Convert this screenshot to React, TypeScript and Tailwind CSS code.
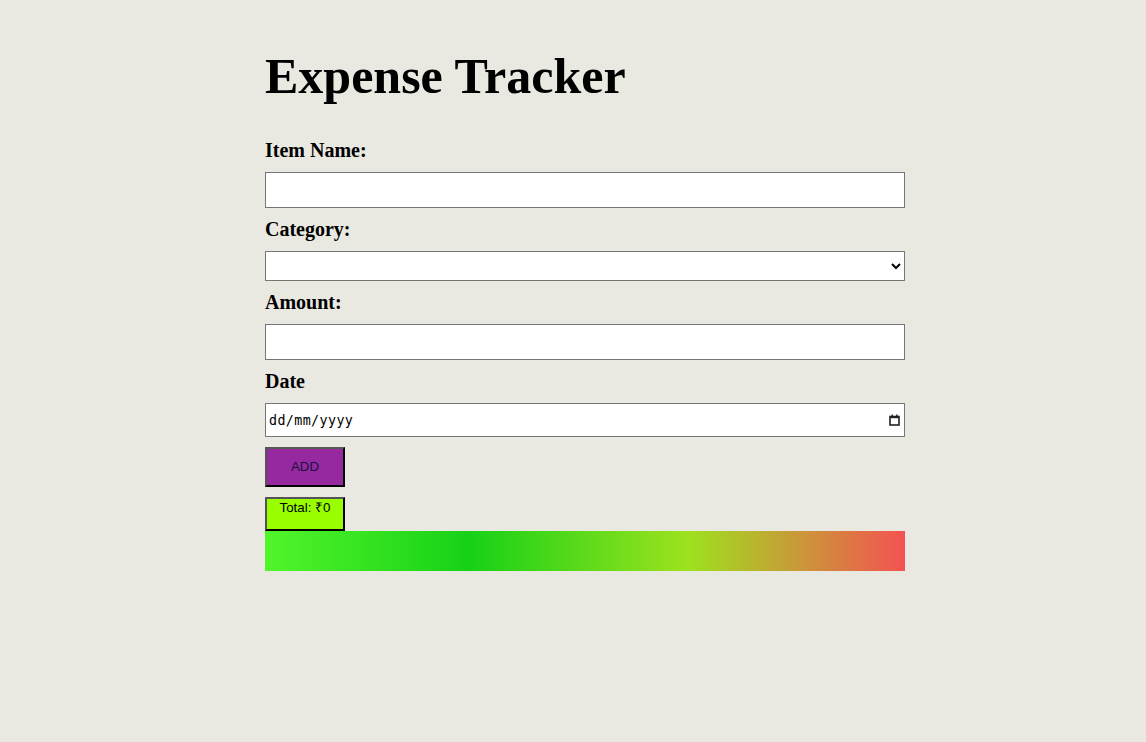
import { useState } from "react";

export default function App() {
  const [total] = useState(0);

  return (
    <div className="min-h-[742px] w-full bg-[#e9e9e1] font-['Liberation_Serif',serif] text-black">
      <div className="ml-[265px] w-[640px] pt-[49px]">
        <h1 className="text-[50px] font-bold leading-[55px]">Expense Tracker</h1>

        <form className="mt-[35px] flex flex-col" onSubmit={(e) => e.preventDefault()}>
          <label className="text-[20px] font-bold leading-[23px]">Item Name:</label>
          <input
            type="text"
            className="mt-[10px] h-[36px] w-full border border-[#767676] bg-white px-2 font-['Liberation_Sans',sans-serif] text-[13px]"
          />

          <label className="mt-[10px] text-[20px] font-bold leading-[23px]">Category:</label>
          <select className="mt-[10px] h-[30px] w-full border border-[#767676] bg-white font-['Liberation_Sans',sans-serif] text-[13px]">
            <option value=""></option>
            <option value="food">Food</option>
            <option value="travel">Travel</option>
            <option value="bills">Bills</option>
          </select>

          <label className="mt-[10px] text-[20px] font-bold leading-[23px]">Amount:</label>
          <input
            type="number"
            className="mt-[10px] h-[36px] w-full border border-[#767676] bg-white px-2 font-['Liberation_Sans',sans-serif] text-[13px]"
          />

          <label className="mt-[10px] text-[20px] font-bold leading-[23px]">Date</label>
          <div className="relative mt-[10px] h-[34px] w-full">
            <input
              type="text"
              placeholder="dd/mm/yyyy"
              className="h-full w-full border border-[#767676] bg-white pl-[3px] pr-8 font-['DejaVu_Sans_Mono',monospace] text-[13.33px] tracking-[0.4px] placeholder:text-black"
            />
            {/* calendar picker glyph */}
            <svg
              className="pointer-events-none absolute right-[5px] top-[11px]"
              width="11"
              height="12"
              viewBox="0 0 11 12"
            >
              <rect x="1" y="2.5" width="9" height="8.5" fill="none" stroke="#222" strokeWidth="1.6" />
              <rect x="1" y="2" width="9" height="2.2" fill="#222" />
              <rect x="2.5" y="0.5" width="1.4" height="2" fill="#222" />
              <rect x="7.1" y="0.5" width="1.4" height="2" fill="#222" />
            </svg>
          </div>

          <button
            type="submit"
            className="mt-[10px] h-[40px] w-[80px] border-2 border-t-[#555] border-l-[#555] border-r-black border-b-black bg-[#9629a0] font-['Liberation_Sans',sans-serif] text-[13.33px] text-[#1a1040]"
          >
            ADD
          </button>
        </form>

        <div className="mt-[10px] h-[34px] w-[80px] border-2 border-t-[#555] border-l-[#555] border-r-black border-b-black bg-[#99ff00] pt-px text-center font-['Liberation_Sans',sans-serif] text-[13.33px] leading-[15px]">
          Total: ₹{total}
        </div>
        <div className="h-[40px] w-full bg-[linear-gradient(to_right,#52f52a_0%,#17d117_32%,#9de21e_66%,#f45252_100%)]" />
      </div>
    </div>
  );
}
